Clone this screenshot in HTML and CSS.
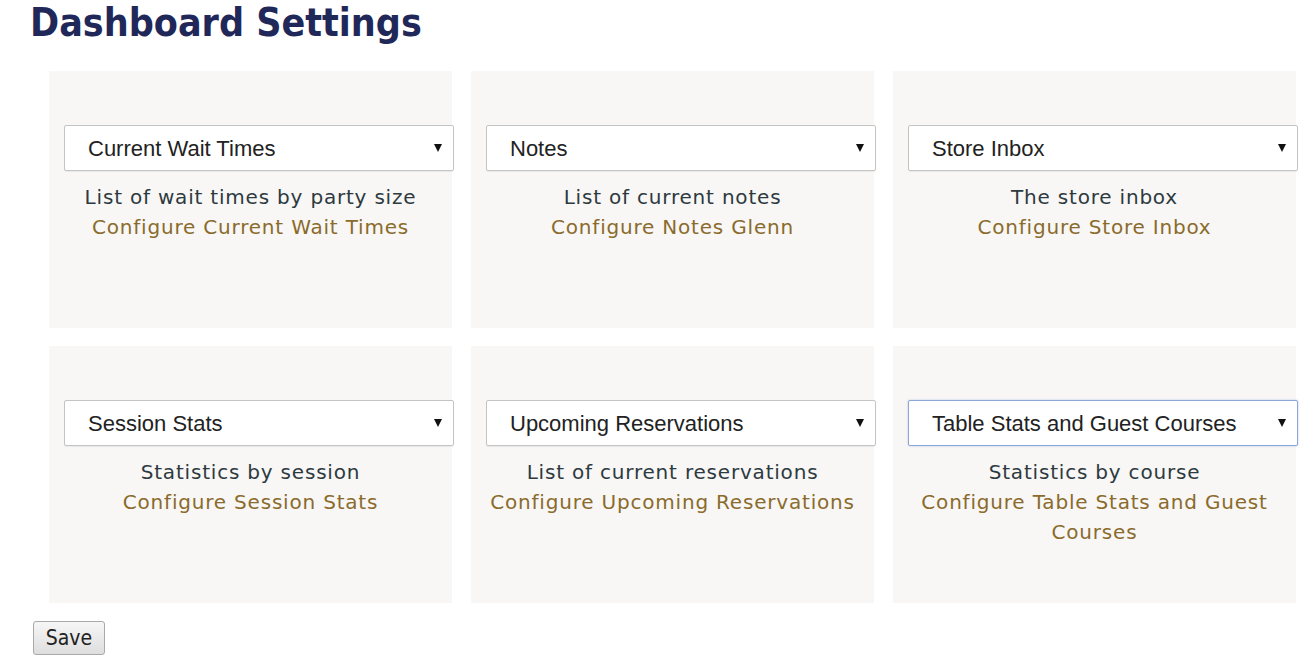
FILE: index.html
```html
<!DOCTYPE html>
<html lang="en">
<head>
  <meta charset="UTF-8">
  <meta name="viewport" content="width=device-width, initial-scale=1.0">
  <title>Dashboard Settings</title>
  <link rel="stylesheet" href="styles.css">
</head>
<body>
  <h1 class="page-title">Dashboard Settings</h1>

  <div class="widget-grid">
    <div class="widget-card">
      <div class="select-wrap">
        <select class="widget-select">
          <option selected>Current Wait Times</option>
          <option>Notes</option>
          <option>Store Inbox</option>
        </select>
        <span class="select-arrow"></span>
      </div>
      <div class="widget-info">
        <div class="widget-desc">List of wait times by party size</div>
        <a class="widget-link" href="#">Configure Current Wait Times</a>
      </div>
    </div>

    <div class="widget-card">
      <div class="select-wrap">
        <select class="widget-select">
          <option selected>Notes</option>
        </select>
        <span class="select-arrow"></span>
      </div>
      <div class="widget-info">
        <div class="widget-desc">List of current notes</div>
        <a class="widget-link" href="#">Configure Notes Glenn</a>
      </div>
    </div>

    <div class="widget-card">
      <div class="select-wrap">
        <select class="widget-select">
          <option selected>Store Inbox</option>
        </select>
        <span class="select-arrow"></span>
      </div>
      <div class="widget-info">
        <div class="widget-desc">The store inbox</div>
        <a class="widget-link" href="#">Configure Store Inbox</a>
      </div>
    </div>

    <div class="widget-card">
      <div class="select-wrap">
        <select class="widget-select">
          <option selected>Session Stats</option>
        </select>
        <span class="select-arrow"></span>
      </div>
      <div class="widget-info">
        <div class="widget-desc">Statistics by session</div>
        <a class="widget-link" href="#">Configure Session Stats</a>
      </div>
    </div>

    <div class="widget-card">
      <div class="select-wrap">
        <select class="widget-select">
          <option selected>Upcoming Reservations</option>
        </select>
        <span class="select-arrow"></span>
      </div>
      <div class="widget-info">
        <div class="widget-desc">List of current reservations</div>
        <a class="widget-link" href="#">Configure Upcoming Reservations</a>
      </div>
    </div>

    <div class="widget-card">
      <div class="select-wrap">
        <select class="widget-select select-focus">
          <option selected>Table Stats and Guest Courses</option>
        </select>
        <span class="select-arrow"></span>
      </div>
      <div class="widget-info">
        <div class="widget-desc">Statistics by course</div>
        <a class="widget-link" href="#">Configure Table Stats and Guest Courses</a>
      </div>
    </div>
  </div>

  <button class="save-btn" type="button">Save</button>
</body>
</html>
```

FILE: styles.css
```css
body {
  background-color: #ffffff;
  color: #2d3a40;
  font-family: "DejaVu Sans", Verdana, sans-serif;
  margin: 0;
  padding: 0 15px 0 30px;
}

.page-title {
  margin: 0;
  padding-top: 0;
  font-family: "DejaVu Sans Condensed", "DejaVu Sans", Verdana, sans-serif;
  font-stretch: condensed;
  font-size: 39px;
  font-weight: bold;
  color: #1f2858;
  line-height: 46px;
}

.widget-grid {
  display: grid;
  grid-template-columns: repeat(3, 403px);
  grid-auto-rows: 257px;
  column-gap: 19px;
  row-gap: 18px;
  margin: 25px 0 0 19px;
}

.widget-card {
  background-color: #f8f7f6;
  padding-top: 54px;
  box-sizing: border-box;
}

.select-wrap {
  position: relative;
  width: 390px;
  margin-left: 15px;
}

.widget-select {
  appearance: none;
  -webkit-appearance: none;
  display: block;
  width: 390px;
  height: 46px;
  box-sizing: border-box;
  padding: 0 30px 0 23px;
  font-family: "Liberation Sans", Arial, sans-serif;
  font-size: 22px;
  color: #222;
  background-color: #fff;
  border: 1px solid #c4c4c4;
  border-radius: 2px;
  box-shadow: 0 1px 1px rgba(0, 0, 0, 0.06);
}

.select-focus {
  border-color: #8ea6d6;
  box-shadow: 0 0 2px rgba(100, 140, 210, 0.5);
}

.select-arrow {
  position: absolute;
  right: 12px;
  top: 19px;
  width: 0;
  height: 0;
  border-left: 4px solid transparent;
  border-right: 4px solid transparent;
  border-top: 8px solid #111;
  pointer-events: none;
}

.widget-info {
  margin-top: 11px;
  text-align: center;
  font-size: 20px;
  letter-spacing: 0.8px;
  line-height: 30px;
  padding: 0 6px;
}

.widget-desc {
  color: #2d3a40;
}

.widget-link {
  color: #8a6b2c;
  text-decoration: none;
}

.save-btn {
  margin: 18px 0 0 3px;
  width: 72px;
  height: 34px;
  padding: 0;
  font-family: "DejaVu Sans Condensed", "DejaVu Sans", Verdana, sans-serif;
  font-stretch: condensed;
  font-size: 21px;
  color: #222;
  background: linear-gradient(#f6f6f6, #dedede);
  border: 1px solid #a9a9a9;
  border-radius: 3px;
}
```
